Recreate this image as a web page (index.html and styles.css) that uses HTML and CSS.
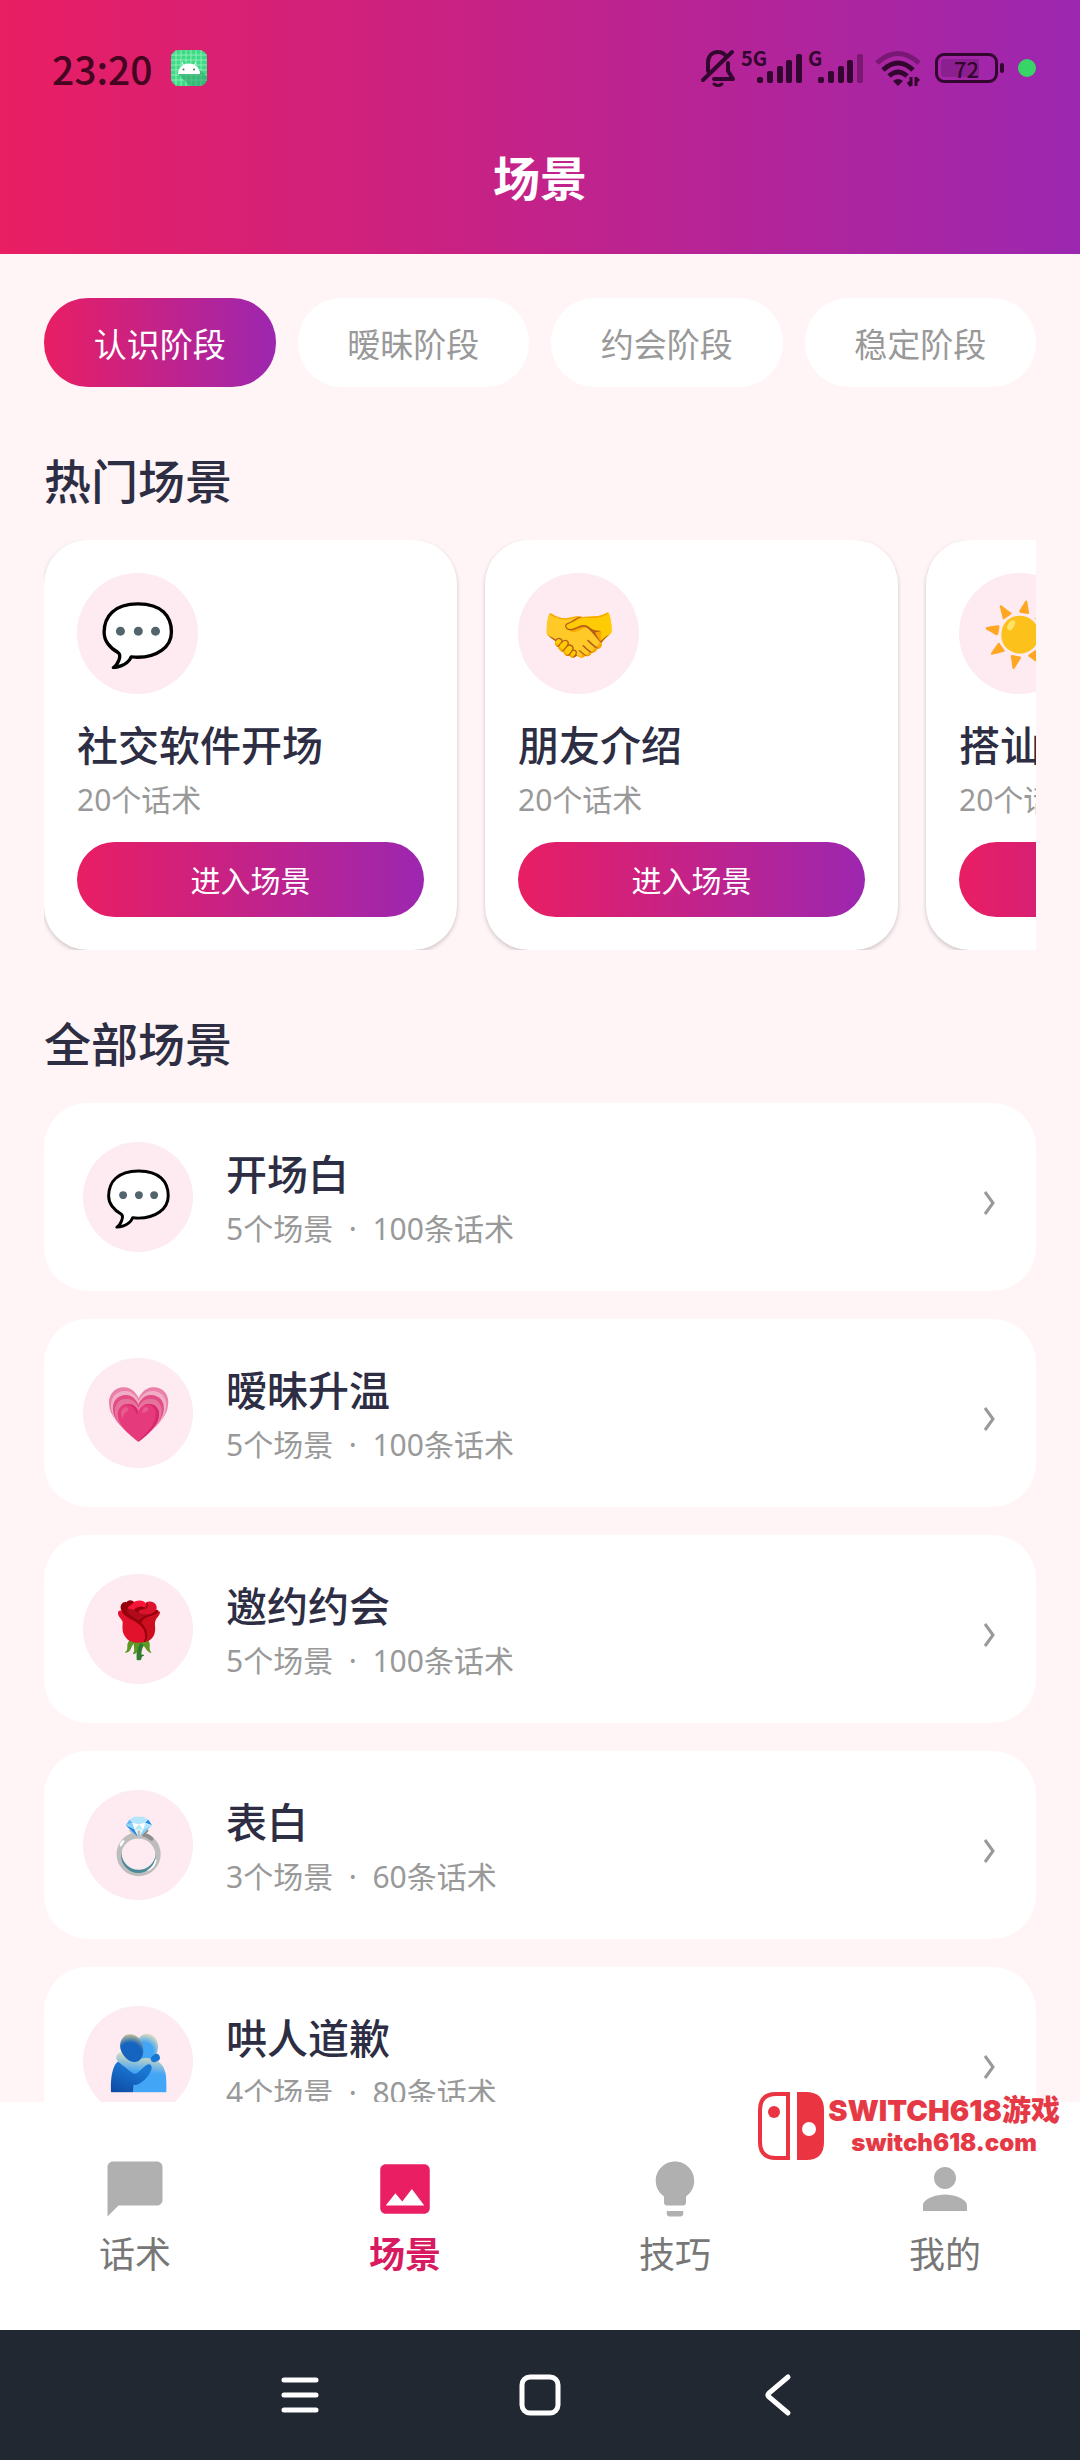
FILE: index.html
```html
<!DOCTYPE html>
<html lang="zh-CN">
<head>
    <meta charset="UTF-8">
    <meta name="viewport" content="width=device-width, initial-scale=1.0">
    <title>场景</title>
    <link rel="stylesheet" href="styles.css">
</head>
<body>

<header class="header">
    <div class="status-bar">
        <span class="time">23:20</span>
        <svg class="app-icon" width="36" height="36" viewBox="0 0 36 36">
            <rect width="36" height="36" rx="8" fill="#3ddc84"/>
            <path d="M5 0v36M10 0v36M15 0v36M20 0v36M25 0v36M30 0v36M0 5h36M0 10h36M0 15h36M0 20h36M0 25h36M0 30h36" stroke="#a5efc8" stroke-width="0.8"/>
            <path d="M7 24 19 36h9q8 0 8-8v-2l-7-6z" fill="#2fa56a" opacity="0.6"/>
            <path d="M7 24a11 10.500 0 0 1 22 0z" fill="#fff"/>
            <path d="M11 12l2 4M25 12l-2 4" stroke="#fff" stroke-width="1"/>
            <circle cx="12.500" cy="19.500" r="1" fill="#2b7a55"/>
            <circle cx="23" cy="19.500" r="1" fill="#2b7a55"/>
        </svg>
        <div class="status-icons">
            <svg width="36" height="40" viewBox="0 0 36 40" fill="none" stroke="#33062f" stroke-width="4" stroke-linecap="round" stroke-linejoin="round">
                <path d="M8 23V15C8 8 12 4 18 4q5 0 8 4M28 15v8l5 8H14"/>
                <path d="M3 32 32 4"/>
                <path d="M14 36q4 3 8 0" stroke-width="3"/>
            </svg>
            <svg width="62" height="40" viewBox="0 0 62 40" fill="#33062f">
                <text x="0" y="18" class="net-label">5G</text>
                <rect x="16" y="29" width="6" height="6" rx="2"/>
                <rect x="26" y="23" width="6" height="12" rx="2"/>
                <rect x="36" y="18" width="6" height="17" rx="2"/>
                <rect x="45" y="12" width="6" height="23" rx="2"/>
                <rect x="55" y="6" width="6" height="29" rx="2"/>
            </svg>
            <svg width="56" height="40" viewBox="0 0 56 40" fill="#33062f">
                <text x="0" y="18" class="net-label">G</text>
                <rect x="10" y="29" width="6" height="6" rx="2"/>
                <rect x="20" y="23" width="6" height="12" rx="2"/>
                <rect x="30" y="18" width="6" height="17" rx="2"/>
                <rect x="39" y="12" width="6" height="23" rx="2"/>
                <rect x="49" y="6" width="6" height="29" rx="2" opacity="0.4"/>
            </svg>
            <svg class="wifi" width="46" height="40" viewBox="0 0 46 40" fill="none" stroke="#33062f" stroke-width="5">
                <path d="M2 15q21-19 42 0" opacity="0.4"/>
                <path d="M8 22q15-14 30 0"/>
                <path d="M14 28q9-8 18 0"/>
                <path d="M18 33q5-4 10 0l-5 5z" fill="#33062f" stroke="none"/>
                <path d="M36 29v9M41 38v-9M33 34l3 4M41 30l3 3" stroke-width="3"/>
            </svg>
            <div class="battery"><span class="battery-text">72</span></div>
            <span class="rec-dot"></span>
        </div>
    </div>
    <h1 class="page-title">场景</h1>
</header>

<main class="content">
    <div class="chips">
        <button class="chip active">认识阶段</button>
        <button class="chip">暧昧阶段</button>
        <button class="chip">约会阶段</button>
        <button class="chip">稳定阶段</button>
    </div>

    <h2 class="section-title">热门场景</h2>
    <div class="hot-list">
        <div class="hot-card">
            <div class="icon">💬</div>
            <h3 class="card-title">社交软件开场</h3>
            <p class="card-sub">20个话术</p>
            <button class="enter-btn">进入场景</button>
        </div>
        <div class="hot-card">
            <div class="icon">🤝</div>
            <h3 class="card-title">朋友介绍</h3>
            <p class="card-sub">20个话术</p>
            <button class="enter-btn">进入场景</button>
        </div>
        <div class="hot-card">
            <div class="icon">☀️</div>
            <h3 class="card-title">搭讪</h3>
            <p class="card-sub">20个话术</p>
            <button class="enter-btn">进入场景</button>
        </div>
    </div>

    <h2 class="section-title">全部场景</h2>
    <div class="all-list">
        <a class="row" href="#">
            <div class="icon">💬</div>
            <div class="row-text">
                <h3 class="card-title">开场白</h3>
                <p class="card-sub">5个场景 &nbsp;·&nbsp; 100条话术</p>
            </div>
            <svg class="arrow" width="14" height="26" viewBox="0 0 14 26"><path d="M2 2l8 11-8 11"/></svg>
        </a>
        <a class="row" href="#">
            <div class="icon">💗</div>
            <div class="row-text">
                <h3 class="card-title">暧昧升温</h3>
                <p class="card-sub">5个场景 &nbsp;·&nbsp; 100条话术</p>
            </div>
            <svg class="arrow" width="14" height="26" viewBox="0 0 14 26"><path d="M2 2l8 11-8 11"/></svg>
        </a>
        <a class="row" href="#">
            <div class="icon">🌹</div>
            <div class="row-text">
                <h3 class="card-title">邀约约会</h3>
                <p class="card-sub">5个场景 &nbsp;·&nbsp; 100条话术</p>
            </div>
            <svg class="arrow" width="14" height="26" viewBox="0 0 14 26"><path d="M2 2l8 11-8 11"/></svg>
        </a>
        <a class="row" href="#">
            <div class="icon">💍</div>
            <div class="row-text">
                <h3 class="card-title">表白</h3>
                <p class="card-sub">3个场景 &nbsp;·&nbsp; 60条话术</p>
            </div>
            <svg class="arrow" width="14" height="26" viewBox="0 0 14 26"><path d="M2 2l8 11-8 11"/></svg>
        </a>
        <a class="row" href="#">
            <div class="icon">🫂</div>
            <div class="row-text">
                <h3 class="card-title">哄人道歉</h3>
                <p class="card-sub">4个场景 &nbsp;·&nbsp; 80条话术</p>
            </div>
            <svg class="arrow" width="14" height="26" viewBox="0 0 14 26"><path d="M2 2l8 11-8 11"/></svg>
        </a>
    </div>
</main>

<nav class="tab-bar">
    <a class="tab" href="#">
        <svg width="66" height="66" viewBox="0 0 24 24"><path d="M20 2H4c-1.100 0-2 .9-2 2v18l4-4h14c1.100 0 2-.9 2-2V4c0-1.100-.9-2-2-2z"/></svg>
        <span>话术</span>
    </a>
    <a class="tab active" href="#">
        <svg width="66" height="66" viewBox="0 0 24 24"><path d="M21 19V5c0-1.100-.9-2-2-2H5c-1.100 0-2 .9-2 2v14c0 1.100.9 2 2 2h14c1.100 0 2-.9 2-2zM8.500 13.500l2.500 3.010L14.500 12l4.500 6H5l3.500-4.500z"/></svg>
        <span>场景</span>
    </a>
    <a class="tab" href="#">
        <svg width="66" height="66" viewBox="0 0 24 24"><path d="M9 21c0 .55.45 1 1 1h4c.55 0 1-.45 1-1v-1H9v1zm3-19C8.140 2 5 5.140 5 9c0 2.380 1.190 4.470 3 5.740V17c0 .55.45 1 1 1h6c.55 0 1-.45 1-1v-2.260c1.810-1.270 3-3.360 3-5.740 0-3.860-3.140-7-7-7z"/></svg>
        <span>技巧</span>
    </a>
    <a class="tab" href="#">
        <svg width="66" height="66" viewBox="0 0 24 24"><path d="M12 12c2.210 0 4-1.790 4-4s-1.790-4-4-4-4 1.790-4 4 1.790 4 4 4zm0 2c-2.670 0-8 1.340-8 4v2h16v-2c0-2.660-5.330-4-8-4z"/></svg>
        <span>我的</span>
    </a>

    <div class="site-mark">
        <svg width="66" height="68" viewBox="0 0 66 68">
            <path d="M30 2v64H18Q2 66 2 50V18Q2 2 18 2z" fill="#fff" stroke="#ea3442" stroke-width="4"/>
            <circle cx="16" cy="20" r="6" fill="#ea3442"/>
            <path d="M39 0h9q18 0 18 18v32q0 18-18 18h-9z" fill="#ea3442"/>
            <circle cx="51" cy="37" r="7" fill="#fff"/>
        </svg>
        <div class="site-text">
            <span class="site-name">SWITCH618游戏</span>
            <span class="site-url">switch618.com</span>
        </div>
    </div>
</nav>

<div class="system-nav">
    <button class="sys-btn" aria-label="菜单">
        <svg width="44" height="44" viewBox="0 0 44 44"><path d="M6 7h32M6 22h32M6 37h32"/></svg>
    </button>
    <button class="sys-btn" aria-label="主页">
        <svg width="44" height="44" viewBox="0 0 44 44"><rect x="4" y="4" width="36" height="36" rx="8"/></svg>
    </button>
    <button class="sys-btn" aria-label="返回">
        <svg width="44" height="44" viewBox="0 0 44 44"><path d="M30 4 11 20q-2 2 0 4L30 40"/></svg>
    </button>
</div>

</body>
</html>
```
FILE: styles.css
```css
* {
    box-sizing: border-box;
}
body {
    margin: 0;
    height: 100vh;
    display: flex;
    flex-direction: column;
    background: #fff5f6;
    font-family: "Noto Sans CJK SC", sans-serif;
    color: #2d2d44;
}
h1, h2, h3, p {
    margin: 0;
}
a {
    color: inherit;
    text-decoration: none;
}
button {
    border: none;
    padding: 0;
    font-family: inherit;
    cursor: pointer;
}
svg {
    display: block;
}

/* header */
.header {
    background: linear-gradient(to right, #e91e63, #9c27b0);
    color: #fff;
}
.status-bar {
    display: flex;
    align-items: center;
    padding: 38px 44px 4px 52px;
}
.time {
    font-size: 39px;
    line-height: 60px;
    font-weight: 500;
    color: #45041f;
}
.app-icon {
    margin-left: 18px;
}
.status-icons {
    display: flex;
    align-items: center;
    margin-left: auto;
}
.status-icons svg {
    margin-right: 5px;
    overflow: visible;
}
.status-icons .wifi {
    margin: 0 14px 0 6px;
}
.net-label {
    font-size: 20px;
    font-weight: 700;
}
.battery {
    position: relative;
    width: 63px;
    height: 30px;
    border: 3px solid #33062f;
    border-radius: 9px;
    background: linear-gradient(to right, #8c1f90 72%, transparent 72%);
    background-clip: content-box;
    padding: 3px;
    margin-right: 20px;
}
.battery::after {
    content: "";
    position: absolute;
    right: -9px;
    top: 7px;
    width: 4px;
    height: 10px;
    border-radius: 2px;
    background: #33062f;
}
.battery-text {
    position: absolute;
    inset: 0;
    text-align: center;
    font-size: 22px;
    line-height: 24px;
    font-weight: 500;
    color: #33062f;
}
.rec-dot {
    width: 18px;
    height: 18px;
    border-radius: 50%;
    background: #37d468;
}
.page-title {
    font-size: 47px;
    line-height: 148px;
    padding-bottom: 4px;
    font-weight: 700;
    text-align: center;
}

/* content */
.content {
    flex: 1;
    min-height: 0;
    overflow-y: auto;
    scrollbar-width: none;
    padding: 44px;
}
.chips {
    display: flex;
    gap: 22px;
}
.chip {
    flex: 1;
    height: 89px;
    border-radius: 44px;
    background: #fff;
    color: #999;
    font-size: 33px;
}
.chip.active {
    background: linear-gradient(to right, #e91e63, #9c27b0);
    color: #fff;
}
.section-title {
    font-size: 47px;
    line-height: 60px;
    font-weight: 500;
    margin: 62px 0 31px;
}
.icon {
    flex: none;
    display: flex;
    align-items: center;
    justify-content: center;
    padding-bottom: 8px;
    border-radius: 50%;
    background: #fdebf1;
}
.card-title {
    font-size: 41px;
    line-height: 54px;
    font-weight: 500;
}
.card-sub {
    font-family: "Noto Sans", "Noto Sans CJK SC", sans-serif;
    font-size: 30px;
    line-height: 38px;
    color: #999;
    margin-top: 11px;
}

/* hot scenes */
.hot-list {
    display: flex;
    gap: 28px;
    overflow-x: auto;
    scrollbar-width: none;
}
.hot-card {
    flex: none;
    width: 413px;
    padding: 33px;
    border-radius: 44px;
    background: #fff;
    box-shadow: 0 2px 4px rgba(0, 0, 0, 0.2);
}
.hot-card .icon {
    width: 121px;
    height: 121px;
    font-size: 61px;
    margin-bottom: 22px;
}
.enter-btn {
    width: 100%;
    height: 75px;
    border-radius: 38px;
    background: linear-gradient(to right, #e91e63, #9c27b0);
    color: #fff;
    font-size: 30px;
    padding-bottom: 2px;
    margin-top: 23px;
    display: block;
}

/* all scenes */
.all-list {
    display: flex;
    flex-direction: column;
    gap: 28px;
}
.row {
    display: flex;
    align-items: center;
    gap: 33px;
    padding: 39px;
    border-radius: 44px;
    background: #fff;
}
.row .icon {
    width: 110px;
    height: 110px;
    font-size: 54px;
}
.row-text {
    flex: 1;
    padding-bottom: 1px;
}
.arrow {
    fill: none;
    stroke: #999;
    stroke-width: 3;
    margin-top: 12px;
}

/* bottom tabs */
.tab-bar {
    position: relative;
    display: flex;
    height: 228px;
    padding-top: 54px;
    background: #fff;
}
.tab {
    flex: 1;
    display: flex;
    flex-direction: column;
    align-items: center;
    gap: 4px;
    font-size: 36px;
    line-height: 52px;
    color: #777;
}
.tab svg {
    fill: #b0b0b0;
}
.tab.active {
    color: #d81b60;
    font-weight: 700;
}
.tab.active svg {
    fill: #e91e63;
}

.site-mark {
    position: absolute;
    right: 20px;
    top: -10px;
    display: flex;
    gap: 4px;
    color: #e63946;
    white-space: nowrap;
}
.site-text {
    display: flex;
    flex-direction: column;
    align-items: center;
    font-family: Inter, "Noto Sans CJK SC", sans-serif;
    font-weight: 900;
}
.site-name {
    font-size: 29px;
    line-height: 38px;
}
.site-url {
    font-size: 24px;
    line-height: 26px;
}

/* android buttons */
.system-nav {
    display: flex;
    height: 130px;
    padding: 0 180px;
    background: #222831;
}
.sys-btn {
    flex: 1;
    display: flex;
    align-items: center;
    justify-content: center;
    background: none;
}
.sys-btn svg {
    fill: none;
    stroke: #fff;
    stroke-width: 5;
    stroke-linecap: round;
}
```
